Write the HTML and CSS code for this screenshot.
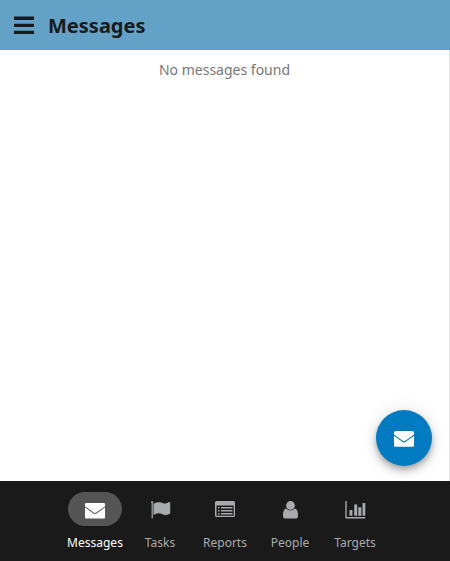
FILE: index.html
```html
<!DOCTYPE html>
<html lang="en">
<head>
<meta charset="utf-8">
<meta name="viewport" content="width=device-width, initial-scale=1">
<title>Messages</title>
<link rel="stylesheet" href="styles.css">
</head>
<body>
<header class="header">
  <button class="menu" type="button" aria-label="Menu">
    <svg class="menu-icon" viewBox="0 0 20 20"><path d="M0 .5H20V4H0ZM0 7.700H20V11H0ZM0 14.700H20V18H0Z"/></svg>
  </button>
  <h1 class="title">Messages</h1>
</header>
<main class="content">
  <p class="empty">No messages found</p>
  <button class="fab" type="button" aria-label="New message">
    <svg class="icon" viewBox="0 0 24 24"><path d="M3.500 5H20.500Q22 5 22 6.500V8.500L14 14.300Q12.800 15.300 12 15.300Q11.200 15.300 10 14.300L2 8.500V6.500Q2 5 3.500 5Z"/><path d="M2 9.700L9.600 15.200Q11 16.400 12 16.400Q13 16.400 14.400 15.200L22 9.700V19.200Q22 20.700 20.500 20.700H3.500Q2 20.700 2 19.200Z"/></svg>
  </button>
</main>
<nav class="tabs">
  <a class="tab active" href="#messages">
    <span class="pill"><svg class="icon" viewBox="0 0 24 24"><path d="M3 6H21Q22 6 22 7V9.200L14 15Q12.800 16 12 16Q11.200 16 10 15L2 9.200V7Q2 6 3 6Z"/><path d="M2 10.300L9.600 15.900Q11 17 12 17Q13 17 14.400 15.900L22 10.300V20.500Q22 21.600 21 21.600H3Q2 21.600 2 20.500Z"/></svg></span>
    <span>Messages</span>
  </a>
  <a class="tab" href="#tasks">
    <span class="pill"><svg class="icon" viewBox="0 0 24 24"><path d="M3 5A1.200 1.200 0 0 1 5.300 5Q5.300 5.800 4.800 6.300V21Q4.800 21.500 4.200 21.500Q3.600 21.500 3.600 21V6.300Q3 5.800 3 5ZM6 6.500Q8.800 5 11.500 5.200Q13.200 5.400 15 6.300Q16.500 6.900 18.400 6.200L21.400 5Q22.200 4.800 22.200 5.700V16Q22.200 16.600 21.400 16.900Q19 18 17.200 18Q15.600 18 14 17Q11.200 15.600 8.800 16.500L6.300 17.700Q5.500 18 5.500 17.200V7.400Q5.500 6.800 6 6.500Z"/></svg></span>
    <span>Tasks</span>
  </a>
  <a class="tab" href="#reports">
    <span class="pill"><svg class="icon" viewBox="0 0 24 24"><path fill-rule="evenodd" d="M3.500 4H20.500Q22 4 22 5.500V18.500Q22 20 20.500 20H3.500Q2 20 2 18.500V5.500Q2 4 3.500 4ZM3.500 8.500V18.700H20.700V8.500Z"/><path d="M5 10H6.500V11.500H5ZM5 13H6.500V14.500H5ZM5 16H6.500V17.500H5ZM8 10H19.500V11.500H8ZM8 13H19.500V14.500H8ZM8 16H19.500V17.500H8Z"/></svg></span>
    <span>Reports</span>
  </a>
  <a class="tab" href="#people">
    <span class="pill"><svg class="icon" viewBox="0 0 24 24"><circle cx="12.500" cy="8.500" r="4.400"/><path d="M8.300 11.500Q10 13.600 12.500 13.600Q15 13.600 16.700 11.500Q20 12 20 18.400Q20 21.600 17.200 21.600H7.800Q5 21.600 5 18.400Q5 12 8.300 11.500Z"/></svg></span>
    <span>People</span>
  </a>
  <a class="tab" href="#targets">
    <span class="pill"><svg class="icon" viewBox="0 0 24 24"><path d="M2.300 4H3.700V20.100H22.300V21.500H2.300ZM6.500 13H9.400V18.800H6.500ZM11.200 7.400H14.200V18.800H11.200ZM15.300 10.200H18.300V18.800H15.300ZM19.500 6H22.300V18.800H19.500Z"/></svg></span>
    <span>Targets</span>
  </a>
</nav>
</body>
</html>
```
FILE: styles.css
```css
* {
  box-sizing: border-box;
}

body {
  display: flex;
  flex-direction: column;
  min-height: 100vh;
  margin: 0;
  background: #fff;
  font-family: "Noto Sans", sans-serif;
}

.header {
  display: flex;
  align-items: center;
  gap: 14px;
  height: 50px;
  padding: 2px 14px 0;
  background: #63a2c6;
  color: #1a1a1a;
}

.menu {
  display: flex;
  padding: 0;
  border: 0;
  background: none;
  color: inherit;
  cursor: pointer;
}

.menu-icon {
  width: 20px;
  height: 20px;
  fill: currentColor;
}

.title {
  margin: 0;
  font-size: 20px;
  line-height: 28px;
  font-weight: 700;
}

.content {
  position: relative;
  flex: 1;
  padding: 10px 0;
  border-right: 1px solid #e0e0e0;
}

.empty {
  margin: 0;
  color: #777;
  font-size: 14px;
  line-height: 20px;
  text-align: center;
}

.fab {
  position: absolute;
  right: 17px;
  bottom: 15px;
  display: flex;
  align-items: center;
  justify-content: center;
  width: 56px;
  height: 56px;
  padding: 0;
  border: 0;
  border-radius: 50%;
  background: #007ac0;
  color: #fff;
  box-shadow: 0 3px 5px rgba(0, 0, 0, 0.2), 0 6px 10px rgba(0, 0, 0, 0.14), 0 1px 18px rgba(0, 0, 0, 0.12);
  cursor: pointer;
}

.icon {
  width: 24px;
  height: 24px;
  fill: currentColor;
}

.tabs {
  display: flex;
  justify-content: center;
  height: 80px;
  padding-top: 11px;
  background: #1a1a1a;
}

.tab {
  display: flex;
  flex-direction: column;
  align-items: center;
  gap: 9px;
  width: 65px;
  color: #a9aaad;
  font-size: 12px;
  line-height: 16px;
  text-decoration: none;
}

.pill {
  display: flex;
  align-items: center;
  justify-content: center;
  width: 54px;
  height: 34px;
  border-radius: 17px;
}

.active {
  color: #fff;
}

.active .pill {
  background: #555;
}
```
